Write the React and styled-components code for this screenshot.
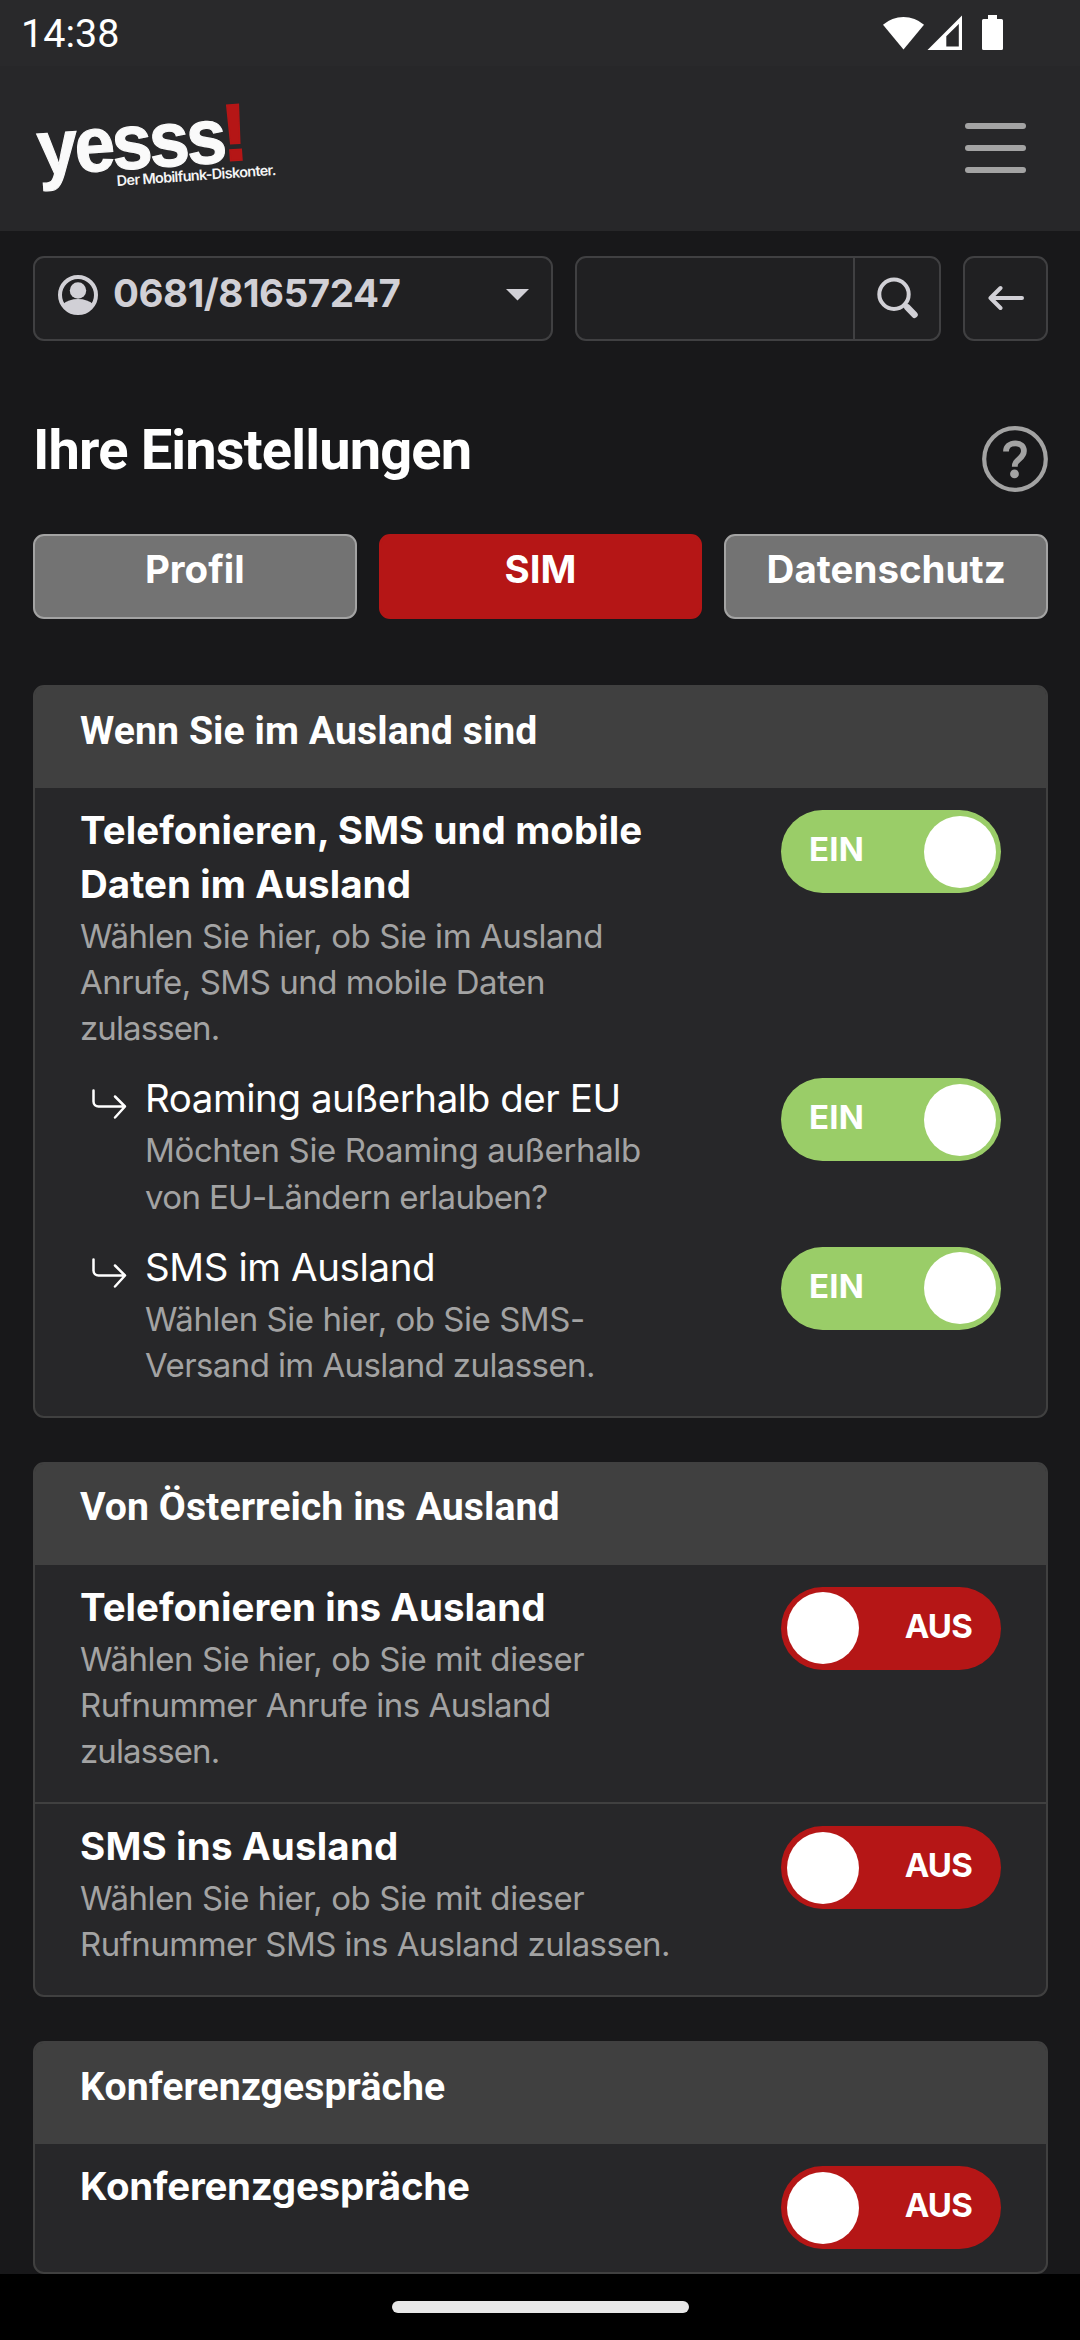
import React from "react";
import styled, { createGlobalStyle } from "styled-components";

const GlobalStyle = createGlobalStyle`
  * {
    box-sizing: border-box;
  }

  body {
    margin: 0;
    background-color: #18181a;
    font-family: Inter, "Liberation Sans", sans-serif;
    color: white;
  }
`;

const Container = styled.div`
  width: 1080px;
  height: 2340px;
  display: flex;
  flex-direction: column;
  overflow: hidden;
`;

const StatusBar = styled.div`
  height: 66px;
  flex-shrink: 0;
  display: flex;
  justify-content: space-between;
  background-color: #29292b;
`;

const Clock = styled.span`
  padding-left: 21px;
  font-family: Roboto, sans-serif;
  font-size: 39.5px;
  line-height: 68px;
`;

const StatusIcons = styled.svg`
  width: 140px;
  height: 66px;
  margin-right: 60px;
`;

const Navbar = styled.header`
  height: 165px;
  flex-shrink: 0;
  display: flex;
  justify-content: space-between;
  background-color: #272729;
`;

const Logo = styled.svg`
  width: 300px;
  height: 165px;
`;

const MenuButton = styled.button`
  width: 61px;
  margin: 57px 54px 0 0;
  padding: 0;
  border: none;
  background: none;
  display: flex;
  flex-direction: column;
  gap: 16px;
`;

const MenuLine = styled.span`
  width: 61px;
  height: 6px;
  border-radius: 3px;
  background-color: #a3a3a3;
`;

const Wrapper = styled.main`
  flex: 1;
  min-height: 0;
  overflow: hidden;
  padding: 25px 32px 0 33px;
`;

const Toolbar = styled.div`
  display: flex;
  gap: 22px;
  height: 85px;
`;

const Field = styled.div`
  display: flex;
  width: ${(props) => props.$width}px;
  border: 2px solid #404042;
  border-radius: 11px;
  background-color: #202022;
`;

const FieldIcon = styled.svg`
  width: ${(props) => props.$width}px;
  height: 81px;
  flex-shrink: 0;
`;

const PhoneNumber = styled.span`
  flex: 1;
  font-size: 38.5px;
  font-weight: 700;
  line-height: 70px;
  letter-spacing: -0.45px;
  color: #d1d0d6;
`;

const SearchInput = styled.input`
  flex: 1;
  min-width: 0;
  border: none;
  outline: none;
  background: none;
`;

const SearchButton = styled.button`
  width: 86px;
  padding: 0;
  border: none;
  border-left: 2px solid #404042;
  background: none;
`;

const TitleRow = styled.div`
  display: flex;
  justify-content: space-between;
  height: 66px;
  margin-top: 85px;
`;

const Title = styled.h1`
  margin: -9px 0 0;
  font-family: Roboto, sans-serif;
  font-size: 56px;
  font-weight: 700;
  line-height: 66px;
  letter-spacing: -0.85px;
`;

const HelpIcon = styled.svg`
  width: 66px;
  height: 66px;
`;

const Tabs = styled.div`
  display: grid;
  grid-template-columns: repeat(3, 1fr);
  gap: 22px;
  margin-top: 42px;
`;

const Tab = styled.button`
  height: 85px;
  padding: 0 0 16px;
  border: 2px solid ${(props) => (props.$active ? "#b51616" : "#a3a3a3")};
  border-radius: 11px;
  background-color: ${(props) => (props.$active ? "#b51616" : "#737373")};
  color: white;
  font-family: inherit;
  font-size: 38.5px;
  font-weight: 700;
  line-height: 54px;
`;

const Cards = styled.div`
  display: flex;
  flex-direction: column;
  gap: 44px;
  margin-top: 66px;
`;

const Card = styled.section`
  border: 2px solid #404040;
  border-radius: 11px;
  background-color: #272729;
`;

const CardTitle = styled.h2`
  height: 101px;
  margin: 0;
  padding: 16.5px 45px 0;
  border-radius: 8px 8px 0 0;
  background-color: #404040;
  font-family: Roboto, sans-serif;
  font-size: 39.2px;
  font-weight: 700;
  line-height: 54px;
  letter-spacing: 0.07px;
`;

const Group = styled.div`
  padding-bottom: 22.8px;

  & + & {
    border-top: 2px solid #404040;
  }
`;

const SettingRow = styled.div`
  display: flex;
  align-items: flex-start;
  padding: 15px 45px 0;
`;

const SubIcon = styled.svg`
  width: 65px;
  height: 60px;
  flex-shrink: 0;
`;

const SettingText = styled.div`
  flex: 1;
  min-width: 0;
  padding-top: 1px;
  padding-bottom: ${(props) => (props.$hasInfo ? 5 : 0)}px;
  white-space: nowrap;
`;

const SettingName = styled.div`
  font-size: 38.5px;
  font-weight: ${(props) => (props.$sub ? 400 : 700)};
  line-height: 53.9px;
  letter-spacing: ${(props) => props.$tracking}px;
`;

const SettingInfo = styled.div`
  margin-top: 1px;
  font-size: 33px;
  line-height: 46.2px;
  color: #a3a3a3;
`;

const InfoLine = styled.div`
  letter-spacing: ${(props) => props.$tracking}px;
`;

const Switch = styled.button`
  width: 220px;
  height: 83px;
  flex-shrink: 0;
  display: flex;
  flex-direction: ${(props) => (props.$on ? "row" : "row-reverse")};
  align-items: center;
  justify-content: space-between;
  margin-top: 7px;
  padding: ${(props) => (props.$on ? "0 5px 0 28px" : "0 29px 0 6px")};
  border: none;
  border-radius: 42px;
  background-color: ${(props) => (props.$on ? "#9acd68" : "#b51616")};
`;

const SwitchLabel = styled.span`
  padding-bottom: 5px;
  color: white;
  font-family: Inter, sans-serif;
  font-size: 33px;
  font-weight: 700;
  letter-spacing: ${(props) => (props.$on ? 0.2 : -0.8)}px;
`;

const Knob = styled.span`
  width: 72px;
  height: 72px;
  border-radius: 50%;
  background-color: white;
`;

const GestureBar = styled.footer`
  height: 66px;
  flex-shrink: 0;
  display: flex;
  align-items: center;
  justify-content: center;
  background-color: black;
`;

const GestureHandle = styled.div`
  width: 297px;
  height: 12px;
  border-radius: 6px;
  background-color: #e8e8e8;
`;

const cards = [
  {
    title: "Wenn Sie im Ausland sind",
    groups: [
      [
        {
          name: ["Telefonieren, SMS und mobile", "Daten im Ausland"],
          tracking: 0.07,
          info: [
            ["Wählen Sie hier, ob Sie im Ausland", -0.43],
            ["Anrufe, SMS und mobile Daten", -0.48],
            ["zulassen.", -0.9]
          ],
          on: true
        },
        {
          name: ["Roaming außerhalb der EU"],
          tracking: -0.45,
          info: [
            ["Möchten Sie Roaming außerhalb", -0.36],
            ["von EU-Ländern erlauben?", -0.64]
          ],
          on: true,
          sub: true
        },
        {
          name: ["SMS im Ausland"],
          tracking: -0.4,
          info: [
            ["Wählen Sie hier, ob Sie SMS-", -0.47],
            ["Versand im Ausland zulassen.", -0.59]
          ],
          on: true,
          sub: true
        }
      ]
    ]
  },
  {
    title: "Von Österreich ins Ausland",
    groups: [
      [
        {
          name: ["Telefonieren ins Ausland"],
          tracking: 0,
          info: [
            ["Wählen Sie hier, ob Sie mit dieser", -0.43],
            ["Rufnummer Anrufe ins Ausland", -0.5],
            ["zulassen.", -0.9]
          ]
        }
      ],
      [
        {
          name: ["SMS ins Ausland"],
          tracking: 0.18,
          info: [
            ["Wählen Sie hier, ob Sie mit dieser", -0.43],
            ["Rufnummer SMS ins Ausland zulassen.", -0.54]
          ]
        }
      ]
    ]
  },
  {
    title: "Konferenzgespräche",
    groups: [[{ name: ["Konferenzgespräche"], tracking: -0.25 }]]
  }
];

const Setting = ({ name, tracking, info, on, sub }) => {
  return (
    <SettingRow>
      {sub && (
        <SubIcon viewBox="0 0 65 60" fill="none" stroke="white">
          <path
            d="M13.5 19.5v11a5 5 0 0 0 5 5h26M35 25.5l10 10-10 11"
            strokeWidth="2.5"
            strokeLinecap="round"
            strokeLinejoin="round"
          />
        </SubIcon>
      )}
      <SettingText $hasInfo={!!info}>
        {name.map((line) => (
          <SettingName key={line} $sub={sub} $tracking={tracking}>
            {line}
          </SettingName>
        ))}
        {info && (
          <SettingInfo>
            {info.map(([line, lineTracking]) => (
              <InfoLine key={line} $tracking={lineTracking}>
                {line}
              </InfoLine>
            ))}
          </SettingInfo>
        )}
      </SettingText>
      <Switch $on={on}>
        <SwitchLabel $on={on}>{on ? "EIN" : "AUS"}</SwitchLabel>
        <Knob />
      </Switch>
    </SettingRow>
  );
};

const App = () => {
  const [activeTab, setActiveTab] = React.useState("SIM");

  return (
    <Container>
      <GlobalStyle />
      <StatusBar>
        <Clock>14:38</Clock>
        <StatusIcons viewBox="880 0 140 66" fill="white">
          <path d="M883 24.8a31 31 0 0 1 41 0L903.5 49.5z" />
          <path
            fillRule="evenodd"
            d="M927.5 50L962 15.5V50zM946.3 36.3V46.5H958.8V24z"
          />
          <path d="M988 15h9v4h4.500a1.500 1.500 0 0 1 1.500 1.500V48.500a1.500 1.500 0 0 1-1.500 1.500h-18a1.500 1.500 0 0 1-1.500-1.500V20.500a1.500 1.500 0 0 1 1.500-1.500H988z" />
        </StatusIcons>
      </StatusBar>
      <Navbar>
        <Logo viewBox="0 66 300 165" fontFamily="Liberation Sans" fontWeight="700">
          <g transform="rotate(-4 42 175)">
            <text
              transform="translate(39 175) scale(0.93 1)"
              fontSize="78"
              letterSpacing="-3.2"
              fill="#fafafa"
              stroke="#fafafa"
              strokeWidth="1.200"
            >
              yesss
            </text>
            <text
              x="223.500"
              y="174"
              fontSize="81"
              fill="#b51616"
              stroke="#b51616"
              strokeWidth="1.500"
            >
              !
            </text>
          </g>
          <text
            x="117"
            y="186"
            fontFamily="Inter"
            fontWeight="600"
            fontSize="14.500"
            fill="#f5f5f5"
            textLength="160"
            lengthAdjust="spacing"
            transform="rotate(-4 117 186)"
          >
            Der Mobilfunk-Diskonter.
          </text>
        </Logo>
        <MenuButton aria-label="Menü">
          <MenuLine />
          <MenuLine />
          <MenuLine />
        </MenuButton>
      </Navbar>
      <Wrapper>
        <Toolbar>
          <Field $width={520}>
            <FieldIcon $width={78} viewBox="35 258 78 81">
              <circle
                cx="78"
                cy="295"
                r="18"
                fill="none"
                stroke="#d1d0d6"
                strokeWidth="4"
              />
              <circle cx="78" cy="290.500" r="8.200" fill="#d1d0d6" />
              <path
                d="M62.500 304.500q6-5.500 15.500-5.500t15.500 5.500a18.500 18.500 0 0 1-31 0z"
                fill="#d1d0d6"
              />
            </FieldIcon>
            <PhoneNumber>0681/81657247</PhoneNumber>
            <FieldIcon $width={60} viewBox="491 258 60 81">
              <path d="M506 289h23l-11.500 11.500z" fill="#d1d0d6" />
            </FieldIcon>
          </Field>
          <Field $width={366}>
            <SearchInput />
            <SearchButton aria-label="Suche">
              <FieldIcon
                $width={84}
                viewBox="855 258 84 81"
                fill="none"
                stroke="#d1d0d6"
                strokeLinecap="round"
              >
                <circle cx="894" cy="294.300" r="14.700" strokeWidth="4" />
                <path d="M904.500 305l2 2" strokeWidth="4" />
                <path d="M907.500 307.500l7 7.200" strokeWidth="6.500" />
              </FieldIcon>
            </SearchButton>
          </Field>
          <Field $width={85}>
            <FieldIcon
              $width={81}
              viewBox="965 258 81 81"
              fill="none"
              stroke="#d1d0d6"
              strokeWidth="4"
              strokeLinecap="round"
              strokeLinejoin="round"
            >
              <path d="M1022 298h-31.500M1000.500 288l-10 10 10 10" />
            </FieldIcon>
          </Field>
        </Toolbar>
        <TitleRow>
          <Title>Ihre Einstellungen</Title>
          <HelpIcon viewBox="0 0 66 66" fill="none" stroke="#a3a3a3">
            <circle cx="33" cy="33" r="30.800" strokeWidth="4.200" />
            <path
              d="M24 25.500c0-5 4-8.200 9.200-8.200 5.500 0 8.700 3.200 8.700 7.700 0 3.700-2 5.700-4.800 8.200-3 2.600-4.300 3.800-4.300 7.500"
              strokeWidth="5.800"
            />
            <circle cx="32.500" cy="47.900" r="4.400" fill="#a3a3a3" stroke="none" />
          </HelpIcon>
        </TitleRow>
        <Tabs>
          {["Profil", "SIM", "Datenschutz"].map((tab) => (
            <Tab
              key={tab}
              $active={tab === activeTab}
              onClick={() => setActiveTab(tab)}
            >
              {tab}
            </Tab>
          ))}
        </Tabs>
        <Cards>
          {cards.map((card) => (
            <Card key={card.title}>
              <CardTitle>{card.title}</CardTitle>
              {card.groups.map((settings, idx) => (
                <Group key={idx}>
                  {settings.map((setting) => (
                    <Setting key={setting.name[0]} {...setting} />
                  ))}
                </Group>
              ))}
            </Card>
          ))}
        </Cards>
      </Wrapper>
      <GestureBar>
        <GestureHandle />
      </GestureBar>
    </Container>
  );
};

export default App;
